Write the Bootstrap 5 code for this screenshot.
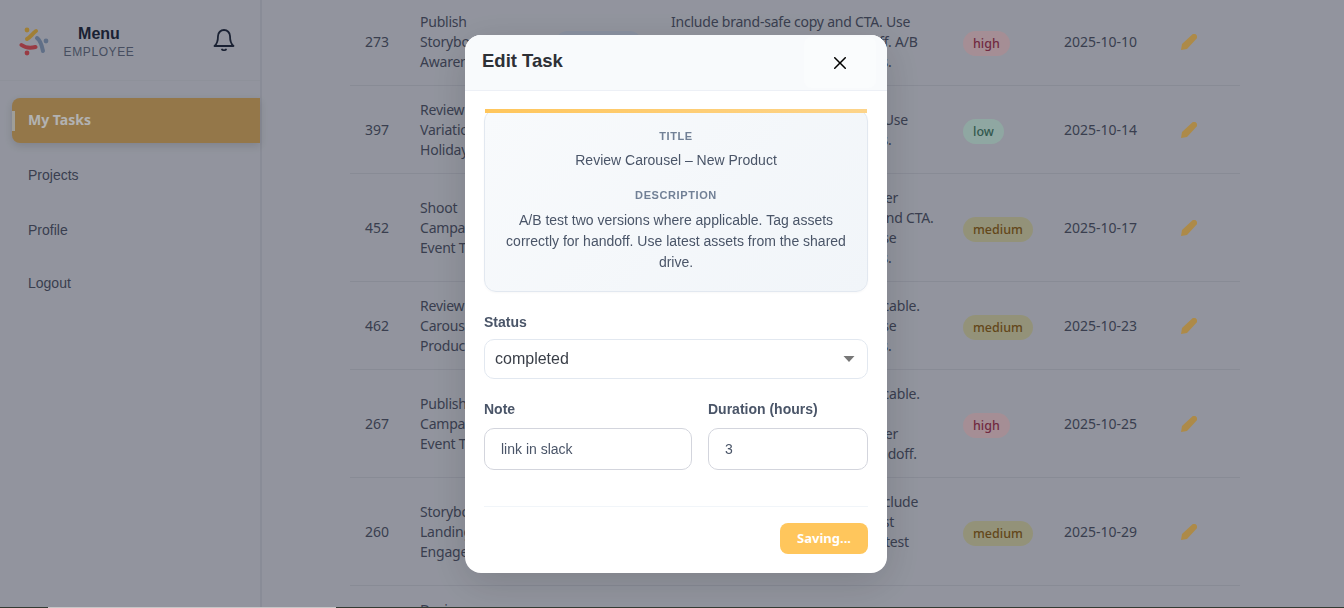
<!DOCTYPE html>
<html lang="en">
<head>
  <meta charset="UTF-8" />
  <meta name="viewport" content="width=device-width, initial-scale=1.0"/>
  <title>My Tasks</title>
  <link href="https://cdn.jsdelivr.net/npm/bootstrap@5.3.0/dist/css/bootstrap.min.css" rel="stylesheet" />
  <style>
    html, body { height: 100%; overflow: hidden; }
    body {
      font-family: "Liberation Sans", Arial, sans-serif;
      background: #d1d5e2;
      color: #535a72;
    }

    /* sidebar */
    .side-panel { width: 262px; height: 100vh; flex-shrink: 0; border-right: 2px solid #c5c9d8; }
    .side-head { height: 81px; padding: 0 24px 0 19px; border-bottom: 1px solid #ccd0dd; }
    .side-logo { width: 34px; height: 34px; margin-top: 1px; }
    .side-brand { width: 86px; margin-left: 3px; padding-top: 3px; text-align: center; }
    .side-brand b { display: block; font-size: 16px; line-height: 20px; color: #26304a; }
    .side-brand span { display: block; font-size: 12px; line-height: 16px; letter-spacing: .6px; color: #66708a; }
    .side-bell { width: 24px; height: 24px; margin-top: -2px; }
    .side-links { padding: 17px 0 0 12px; gap: 10px; }
    .side-link { height: 45px; padding: 0 16px; font-size: 14px; color: #535a72; display: flex; align-items: center; text-decoration: none; }
    .side-link.is-active {
      position: relative;
      padding-bottom: 2px;
      background: #d5ab69;
      color: #fff;
      font-family: "Noto Sans", sans-serif;
      font-weight: 700;
      border-radius: 8px 0 0 8px;
      box-shadow: 0 3px 8px rgba(0,0,0,.12);
    }
    .side-link.is-active::before {
      content: "";
      position: absolute;
      left: 0; top: 13px;
      width: 3px; height: 20px;
      background: #e4e2dc;
    }
    .side-link.is-last { margin-top: -2px; }

    /* tasks table */
    .task-area { flex-grow: 1; height: 100vh; overflow: hidden; padding: 0 104px 0 88px; }
    .task-table {
      width: 890px;
      margin: -2px 0 0;
      table-layout: fixed;
      font-family: "Noto Sans", sans-serif;
      font-size: 14px;
      line-height: 20px;
      --bs-table-bg: transparent;
      --bs-table-color: #535a72;
      color: #535a72;
    }
    .task-table td { padding: 14px 15px 13px; vertical-align: middle; border-bottom: 1px solid #c3c7d6; white-space: nowrap; overflow: hidden; }
    .task-words { letter-spacing: -.22px; }
    .task-pill { display: inline-block; padding: 3px 10px 2px; border-radius: 13px; font-size: 12.5px; line-height: 20px; font-weight: 500; position: relative; top: 1px; }
    .pill-high { background: #ecccd6; color: #a33c5e; }
    .pill-low { background: #cdf0e8; color: #497f71; }
    .pill-medium { background: #d3d2ae; color: #8e6628; }
    .pill-state { background: #c5d0e6; color: #4a5f8c; }
    .task-edit { width: 16px; height: 16px; display: block; }

    /* modal */
    .modal-backdrop.show { opacity: .3; }
    .edit-dialog { max-width: 422px; width: 422px; margin: 35px 0 0 465px; }
    .edit-content { border: 0; border-radius: 16px; box-shadow: 0 10px 40px rgba(0,0,0,.14); overflow: hidden; height: 538px; }
    .edit-head { background: #f8fafc; height: 56px; padding: 0 19px 0 17px; border-bottom: 1px solid #edf0f6; }
    .edit-head h5 { font-family: "Liberation Sans", Arial, sans-serif; font-weight: 700; font-size: 18.5px; color: #2d3036; margin-top: -3px; }
    .edit-close { width: 56px; height: 35px; background-color: rgba(255,255,255,.35); opacity: 1; padding: 0; margin: 2px 0 0; border-radius: 8px; background-size: 12px; }
    .edit-body { padding: 18px 19px 0; }
    .info-box {
      position: relative;
      height: 183px;
      padding: 19px 16px 0;
      text-align: center;
      background: linear-gradient(135deg, #f8fafc, #f1f5f9);
      border: 1px solid #e2e8f0;
      border-radius: 12px;
      box-shadow: 0 1px 2px rgba(0,0,0,.03);
    }
    .info-box::before {
      content: "";
      position: absolute;
      left: 0; right: 0; top: -1px;
      height: 4px;
      background: linear-gradient(90deg, #ffc65c, #fdd48a);
    }
    .info-label { font-size: 11px; line-height: 14px; font-weight: 700; letter-spacing: .6px; color: #718096; }
    .info-text { font-size: 14px; line-height: 21px; color: #4a5568; margin: 7px 0 0; }
    .info-next { margin-top: 17px; }
    .info-next + .info-text { margin-top: 8px; }
    .field-label { font-size: 14px; line-height: 20px; font-weight: 700; color: #4a5568; margin: 0; }
    .status-select {
      display: block;
      width: 100%;
      height: 40px;
      margin-top: 5px;
      padding: 0 10px;
      font-size: 16px;
      color: #3a3f48;
      border: 1px solid #e2e8f0;
      border-radius: 10px;
      background-position: right 12px center;
      background-size: 12px 6px;
      background-image: url("data:image/svg+xml,%3csvg xmlns='http://www.w3.org/2000/svg' viewBox='0 0 12 6'%3e%3cpath fill='%23777' d='M0.5 0h11L6 6z'/%3e%3c/svg%3e");
    }
    .status-block { margin-top: 18px; }
    .edit-pair { display: grid; grid-template-columns: 208px 160px; column-gap: 16px; margin-top: 18px; }
    .edit-input { height: 42px; margin-top: 7px; padding: 0 16px; font-size: 14px; color: #4a5568; border: 1px solid #d3d5dd; border-radius: 10px; }
    .edit-foot { margin-top: 36px; padding-top: 16px; border-top: 1px solid #f1f5f9; }
    .btn-saving {
      width: 88px; height: 31px; padding: 0;
      background: #ffc65c; border: 0; border-radius: 8px;
      color: #fff; font-family: "Noto Sans", sans-serif; font-size: 13px; font-weight: 700;
    }
    .btn-saving:disabled { background: #ffc65c; color: #fff; opacity: 1; }

    .win-edge { position: fixed; left: 0; right: 0; bottom: 0; height: 1px; z-index: 2000; background: #333b33; }
    .win-edge i { display: block; width: 288px; height: 1px; margin-left: 48px; background: #c6c6c6; }
  </style>
</head>
<body>
  <div class="d-flex">
    <aside class="side-panel">
      <div class="side-head d-flex align-items-center">
        <svg class="side-logo" viewBox="0 0 34 34" fill="none" stroke-linecap="round">
          <circle cx="8" cy="6" r="2.400" fill="#e6b64e"/>
          <path d="M8 15c3-1 5-5 9-8" stroke="#e6b64e" stroke-width="4"/>
          <circle cx="27" cy="17" r="2.400" fill="#8aa0c2"/>
          <path d="M18 14c3 2 5 8 6 13" stroke="#8aa0c2" stroke-width="4"/>
          <circle cx="8" cy="29" r="2.400" fill="#dc5562"/>
          <path d="M2.500 21c4 3 10 3 14 2" stroke="#dc5562" stroke-width="4"/>
        </svg>
        <div class="side-brand"><b>Menu</b><span>EMPLOYEE</span></div>
        <svg class="side-bell ms-auto" viewBox="0 0 24 24" fill="none" stroke="#26304a" stroke-width="1.800" stroke-linejoin="round" stroke-linecap="round">
          <path d="M2.500 19c2.500-2 3.500-5 3.500-10a6 6 0 0 1 12 0c0 5 1 8 3.500 10z"/>
          <path d="M10 22.500c1 .9 3 .9 4 0"/>
        </svg>
      </div>
      <nav class="nav flex-column side-links">
        <a class="side-link is-active" href="#">My Tasks</a>
        <a class="side-link" href="#">Projects</a>
        <a class="side-link" href="#">Profile</a>
        <a class="side-link is-last" href="#">Logout</a>
      </nav>
    </aside>

    <main class="task-area">
      <table class="table task-table">
        <colgroup><col style="width:55px"><col style="width:135px"><col style="width:116px"><col style="width:292px"><col style="width:101px"><col style="width:117px"><col style="width:74px"></colgroup>
        <tbody id="taskRows"></tbody>
      </table>
    </main>
  </div>

  <div class="modal-backdrop show"></div>
  <div class="modal d-block" tabindex="-1">
    <div class="modal-dialog edit-dialog">
      <div class="modal-content edit-content">
        <div class="modal-header edit-head d-flex align-items-center justify-content-between">
          <h5 class="modal-title">Edit Task</h5>
          <button type="button" class="btn-close edit-close" aria-label="Close"></button>
        </div>
        <div class="modal-body edit-body">
          <div class="info-box">
            <div class="info-label">TITLE</div>
            <p class="info-text">Review Carousel – New Product</p>
            <div class="info-label info-next">DESCRIPTION</div>
            <p class="info-text">A/B test two versions where applicable. Tag assets correctly for handoff. Use latest assets from the shared drive.</p>
          </div>
          <div class="status-block">
            <label class="field-label" for="statusSelect">Status</label>
            <select class="form-select status-select" id="statusSelect">
              <option>completed</option>
              <option>in progress</option>
              <option>pending</option>
            </select>
          </div>
          <div class="edit-pair">
            <div>
              <label class="field-label" for="noteInput">Note</label>
              <input class="form-control edit-input" id="noteInput" type="text" value="link in slack" />
            </div>
            <div>
              <label class="field-label" for="hoursInput">Duration (hours)</label>
              <input class="form-control edit-input" id="hoursInput" type="text" value="3" />
            </div>
          </div>
          <div class="edit-foot d-flex justify-content-end">
            <button type="button" class="btn btn-saving" disabled>Saving...</button>
          </div>
        </div>
      </div>
    </div>
  </div>

  <div class="win-edge"><i></i></div>

  <script>
    // rows of the task list, the modal sits on top of most of them
    const tasks = [
      { id: 273, title: "Publish<br>Storyboard<br>Awareness", state: "in progress", desc: "Include brand-safe copy and CTA. Use<br>Tag all assets correctly for handoff. A/B<br>latest assets from the shared docs.", pri: "high", date: "2025-10-10" },
      { id: 397, title: "Review<br>Variations<br>Holiday", state: "pending", desc: "Tag assets correctly for handoffs. Use<br>latest assets from the shared docs.", pri: "low", date: "2025-10-14" },
      { id: 452, title: "Shoot<br>Campaign<br>Event Teaser", state: "pending", desc: "Coordinate with the brand designer<br>Include brand-safe copy, photos and CTA.<br>Tag assets correctly, and please use<br>latest assets from the shared docs.", pri: "medium", date: "2025-10-17" },
      { id: 462, title: "Review<br>Carousel<br>Product", state: "completed", desc: "A/B test two versions where applicable.<br>Tag assets correctly, and please use<br>latest assets from the shared docs.", pri: "medium", date: "2025-10-23" },
      { id: 267, title: "Publish<br>Campaign<br>Event Teaser", state: "pending", desc: "A/B test two versions where applicable.<br>Tag assets for handoff.<br>Coordinate with the brand designer<br>please tag assets correctly for handoff.", pri: "high", date: "2025-10-25" },
      { id: 260, title: "Storyboard<br>Landing<br>Engagement", state: "pending", desc: "Use the latest asset and always include<br>brand-safe copy and the very latest<br>assets from the shared drive. A/B test<br>two versions.", pri: "medium", date: "2025-10-29" },
      { id: 281, title: "Design<br>Banner<br>Launch", state: "pending", desc: "Use latest assets from the shared drive.", pri: "low", date: "2025-11-02" }
    ];

    const pencil = '<svg class="task-edit" viewBox="0 0 16 16"><path fill="#f8c667" d="M0 16l1-6L11 .8a2.600 2.600 0 0 1 4.200 4.200L6 15z"/></svg>';

    document.getElementById("taskRows").innerHTML = tasks.map(t => `
      <tr>
        <td>${t.id}</td>
        <td class="task-words">${t.title}</td>
        <td><span class="task-pill pill-state">${t.state}</span></td>
        <td class="task-words">${t.desc}</td>
        <td><span class="task-pill pill-${t.pri}">${t.pri}</span></td>
        <td>${t.date}</td>
        <td>${pencil}</td>
      </tr>`).join("");
  </script>
  <script src="https://cdn.jsdelivr.net/npm/bootstrap@5.3.0/dist/js/bootstrap.bundle.min.js"></script>
</body>
</html>
